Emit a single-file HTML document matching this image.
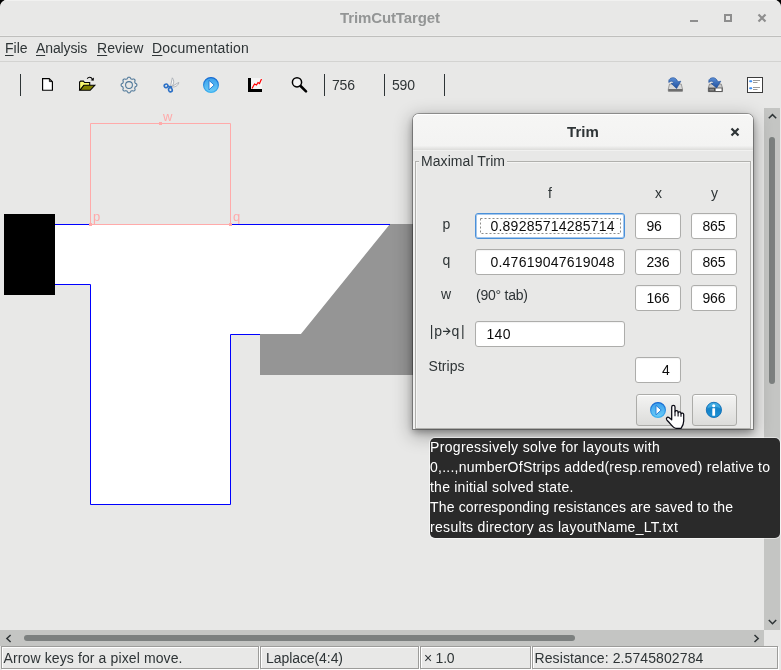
<!DOCTYPE html>
<html>
<head>
<meta charset="utf-8">
<title>TrimCutTarget</title>
<style>
*{box-sizing:border-box;margin:0;padding:0}
html,body{width:781px;height:670px;overflow:hidden;background:#000;}
body{font-family:"Liberation Sans",sans-serif;font-size:14px;line-height:20px;color:#2e3436;position:relative}
.abs{position:absolute}
.t{position:absolute;white-space:pre;font-size:14px;line-height:20px;color:#2e3436}
#win{will-change:transform;position:absolute;left:0;top:0;width:781px;height:670px;background:#e8e8e7;border-radius:7px 7px 0 0;overflow:hidden}
#titlebar{position:absolute;left:0;top:0;width:781px;height:37px;border-bottom:1px solid #bfbfbd;background:#e8e8e7;box-shadow:inset 0 1px #f1f1f0,inset 0 -1px #ecECeb}
#title{position:absolute;left:340px;top:8px;font-weight:bold;font-size:15px;color:#939595;letter-spacing:-0.117px;white-space:pre}
#menubar{position:absolute;left:0;top:37px;width:781px;height:25px;border-bottom:1px solid #d3d3d1}
.mi u{text-decoration:underline;text-underline-offset:1.5px;text-decoration-thickness:1px}
.vsep{position:absolute;width:1px;background:#2e3436;top:74px;height:22px}
#canvas{position:absolute;left:0;top:108px;width:781px;height:522px;background:#e8e8e7;overflow:hidden}
#status{position:absolute;left:0;top:646px;width:781px;height:24px;background:#e8e8e7}
#dialog{will-change:transform;position:absolute;left:413px;top:114px;width:340px;height:315px;background:#e8e8e7;border-radius:6px 6px 0 0;box-shadow:0 0 0 1px rgba(0,0,0,0.30),0 3px 7px 0px rgba(0,0,0,0.30),0 5px 18px 2px rgba(0,0,0,0.30);}
#dhead{position:absolute;left:0;top:0;width:340px;height:37px;border-radius:6px 6px 0 0;box-shadow:inset 0 1px #fff;background:linear-gradient(#f6f6f5 0%,#f3f3f2 88%,#dcdcda 100%);border-bottom:1px solid #91918c}
.inp{position:absolute;height:26px;background:#fff;border:1px solid #adadab;border-radius:3px;box-shadow:inset 0 1px 1px rgba(0,0,0,0.05)}
.btn{position:absolute;height:32px;width:45px;border:1px solid #acaca9;border-radius:3px;background:linear-gradient(#f4f4f3,#dcdcda);box-shadow:inset 0 1px #fff}
#tip{will-change:transform;position:absolute;left:430px;top:438px;width:350px;height:100px;background:#2a2a2a;border-radius:5px;box-shadow:0 0 0 1px rgba(255,255,255,0.5)}
#tip .t{color:#fff;left:0px}
.e{color:#0c0c0c}
</style>
</head>
<body>
<div id="win">
  <div id="titlebar">
    <div id="title">TrimCutTarget</div>
    <div class="abs" style="left:690px;top:20px;width:8px;height:2px;background:#8e8e8e"></div>
    <div class="abs" style="left:724px;top:14px;width:8px;height:8px;border:2px solid #8e8e8e"></div>
    <svg class="abs" style="left:757px;top:13px" width="10" height="10" viewBox="0 0 10 10"><path d="M1.5 1.5 L8.5 8.5 M8.5 1.5 L1.5 8.5" stroke="#8e8e8e" stroke-width="2.2" fill="none"/></svg>
  </div>
  <div id="menubar">
    <div class="t mi" style="left:5px;top:1px;letter-spacing:0px"><u>F</u>ile</div>
    <div class="t mi" style="left:36px;top:1px;letter-spacing:-0.12px"><u>A</u>nalysis</div>
    <div class="t mi" style="left:97px;top:1px;letter-spacing:0.08px"><u>R</u>eview</div>
    <div class="t mi" style="left:152px;top:1px;letter-spacing:0.22px"><u>D</u>ocumentation</div>
  </div>
  <!-- toolbar -->
  <div class="vsep" style="left:20px"></div>
  <div class="vsep" style="left:324px"></div>
  <div class="vsep" style="left:384px"></div>
  <div class="vsep" style="left:444px"></div>
  <div class="t" style="left:332px;top:75px;letter-spacing:-0.18px">756</div>
  <div class="t" style="left:392px;top:75px;letter-spacing:-0.18px">590</div>
  
  <svg class="abs" style="left:0;top:62px" width="781" height="46" viewBox="0 62 781 46">
    <defs>
      <linearGradient id="pg" x1="0" y1="0" x2="0" y2="1"><stop offset="0" stop-color="#3a9fec"/><stop offset="1" stop-color="#6ccdf7"/></linearGradient>
      <linearGradient id="ps" x1="0" y1="0" x2="0" y2="1"><stop offset="0" stop-color="#1668d0"/><stop offset="1" stop-color="#3fb2f0"/></linearGradient>
      <linearGradient id="ig" x1="0" y1="0" x2="0" y2="1"><stop offset="0" stop-color="#2a9adb"/><stop offset="0.5" stop-color="#1483c9"/><stop offset="1" stop-color="#1d93d6"/></linearGradient>
      <linearGradient id="ar" x1="0" y1="0" x2="0" y2="1"><stop offset="0" stop-color="#5b8fd6"/><stop offset="1" stop-color="#1f4f9e"/></linearGradient>
    </defs>
    <!-- new -->
    <path d="M42.6 78.6 H49.2 L52.4 81.8 V90.2 H42.6 Z" fill="#fff" stroke="#000" stroke-width="1.15"/>
    <path d="M49.4 79 V81.6 H52" fill="none" stroke="#000" stroke-width="0.9"/>
    <!-- open -->
    <path d="M79.6 90.2 V82 L80.6 81.1 H83.4 L84.6 82.5 H89.7 V85.2" fill="#fafa70" stroke="#000" stroke-width="1.1"/>
    <path d="M79.8 90.3 L83.8 85.3 H94.8 L90.2 90.3 Z" fill="#808000" stroke="#000" stroke-width="1.1"/>
    <path d="M87.2 78.6 C88.6 76.7 91 76.8 92.4 79" fill="none" stroke="#000" stroke-width="1.1"/>
    <path d="M94 77.5 L93.6 80.8 L90.6 80.3 Z" fill="#000"/>
    <!-- gear -->
    <g fill="none" stroke="#4d7698" stroke-width="1.05">
      <path d="M129.00 77.15 L129.26 77.15 L129.51 77.17 L129.77 77.19 L130.00 77.43 L130.21 77.70 L130.39 77.99 L130.57 78.28 L130.72 78.57 L130.87 78.82 L131.07 78.89 L131.27 78.96 L131.47 79.04 L131.66 79.12 L131.85 79.22 L132.04 79.31 L132.33 79.23 L132.64 79.14 L132.97 79.05 L133.31 78.98 L133.65 78.94 L133.98 78.94 L134.18 79.10 L134.37 79.27 L134.55 79.45 L134.73 79.63 L134.90 79.82 L135.06 80.02 L135.06 80.35 L135.02 80.69 L134.95 81.03 L134.86 81.36 L134.77 81.67 L134.69 81.96 L134.78 82.15 L134.88 82.34 L134.96 82.53 L135.04 82.73 L135.11 82.93 L135.18 83.13 L135.43 83.28 L135.72 83.43 L136.01 83.61 L136.30 83.79 L136.57 84.00 L136.81 84.23 L136.83 84.49 L136.85 84.74 L136.85 85.00 L136.85 85.26 L136.83 85.51 L136.81 85.77 L136.57 86.00 L136.30 86.21 L136.01 86.39 L135.72 86.57 L135.43 86.72 L135.18 86.87 L135.11 87.07 L135.04 87.27 L134.96 87.47 L134.88 87.66 L134.78 87.85 L134.69 88.04 L134.77 88.33 L134.86 88.64 L134.95 88.97 L135.02 89.31 L135.06 89.65 L135.06 89.98 L134.90 90.18 L134.73 90.37 L134.55 90.55 L134.37 90.73 L134.18 90.90 L133.98 91.06 L133.65 91.06 L133.31 91.02 L132.97 90.95 L132.64 90.86 L132.33 90.77 L132.04 90.69 L131.85 90.78 L131.66 90.88 L131.47 90.96 L131.27 91.04 L131.07 91.11 L130.87 91.18 L130.72 91.43 L130.57 91.72 L130.39 92.01 L130.21 92.30 L130.00 92.57 L129.77 92.81 L129.51 92.83 L129.26 92.85 L129.00 92.85 L128.74 92.85 L128.49 92.83 L128.23 92.81 L128.00 92.57 L127.79 92.30 L127.61 92.01 L127.43 91.72 L127.28 91.43 L127.13 91.18 L126.93 91.11 L126.73 91.04 L126.53 90.96 L126.34 90.88 L126.15 90.78 L125.96 90.69 L125.67 90.77 L125.36 90.86 L125.03 90.95 L124.69 91.02 L124.35 91.06 L124.02 91.06 L123.82 90.90 L123.63 90.73 L123.45 90.55 L123.27 90.37 L123.10 90.18 L122.94 89.98 L122.94 89.65 L122.98 89.31 L123.05 88.97 L123.14 88.64 L123.23 88.33 L123.31 88.04 L123.22 87.85 L123.12 87.66 L123.04 87.47 L122.96 87.27 L122.89 87.07 L122.82 86.87 L122.57 86.72 L122.28 86.57 L121.99 86.39 L121.70 86.21 L121.43 86.00 L121.19 85.77 L121.17 85.51 L121.15 85.26 L121.15 85.00 L121.15 84.74 L121.17 84.49 L121.19 84.23 L121.43 84.00 L121.70 83.79 L121.99 83.61 L122.28 83.43 L122.57 83.28 L122.82 83.13 L122.89 82.93 L122.96 82.73 L123.04 82.53 L123.12 82.34 L123.22 82.15 L123.31 81.96 L123.23 81.67 L123.14 81.36 L123.05 81.03 L122.98 80.69 L122.94 80.35 L122.94 80.02 L123.10 79.82 L123.27 79.63 L123.45 79.45 L123.63 79.27 L123.82 79.10 L124.02 78.94 L124.35 78.94 L124.69 78.98 L125.03 79.05 L125.36 79.14 L125.67 79.23 L125.96 79.31 L126.15 79.22 L126.34 79.12 L126.53 79.04 L126.73 78.96 L126.93 78.89 L127.13 78.82 L127.28 78.57 L127.43 78.28 L127.61 77.99 L127.79 77.70 L128.00 77.43 L128.23 77.19 L128.49 77.17 L128.74 77.15 Z"/>
      <circle cx="129" cy="85" r="3.4"/>
    </g>
    <!-- scissors -->
    <path d="M170.4 86.8 L172.3 77.8 C173.9 79.6 174.2 82.4 172.9 85 Z" fill="#f6f6f6" stroke="#a9aeb4" stroke-width="0.9"/>
    <path d="M171 87 L178.8 82.4 C178.6 84.6 177 86.2 174.2 86.9 Z" fill="#f6f6f6" stroke="#a9aeb4" stroke-width="0.9"/>
    <ellipse cx="166.1" cy="85.8" rx="1.9" ry="1.7" transform="rotate(-20 166.1 85.8)" fill="none" stroke="#2c70c6" stroke-width="1.6"/>
    <ellipse cx="170.4" cy="89.8" rx="1.8" ry="2.1" transform="rotate(-20 170.4 89.8)" fill="none" stroke="#2c70c6" stroke-width="1.6"/>
    <path d="M167.8 86.3 L171.2 86.9 L171 87.8" fill="none" stroke="#2c70c6" stroke-width="1.4"/>
    <!-- play -->
    <circle cx="211" cy="85" r="7.4" fill="url(#pg)" stroke="url(#ps)" stroke-width="1.2"/>
    <path d="M209 80.4 L214.2 85 L209 89.8 Z" fill="#fff" stroke="#1e78d4" stroke-width="0.9" stroke-linejoin="round"/>
    <!-- chart -->
    <rect x="248" y="78" width="14" height="14" fill="#f6f6f6"/>
    <path d="M249.5 78 V90.5 H262" fill="none" stroke="#000" stroke-width="3"/>
    <path d="M252 88.5 L254.5 84 L256.5 85 L258 82.5 L259.5 83.5 L261.5 79" fill="none" stroke="#f00" stroke-width="1.2"/>
    <!-- magnifier -->
    <circle cx="297" cy="82.3" r="4.6" fill="#f4f4f4" stroke="#000" stroke-width="1.5"/>
    <path d="M300.6 86 L306 91.4" stroke="#000" stroke-width="2.6" stroke-linecap="round"/>
    <!-- save 1 -->
    <g>
      <path d="M669.5 84 L668.3 89 V91.2 H682.5 V89 L681.2 84 Z" fill="#d8d8d8" stroke="#8c8c8c" stroke-width="0.8"/>
      <rect x="668.3" y="89" width="14.2" height="2.4" fill="#6e6e6e"/>
      <path d="M668.8 80.5 C669.5 77.5 674.5 76.5 676.6 79.6 L678 81.8 L680.8 81.2 L676.6 88.6 L671.2 83.4 L673.8 82.8 C673 81 670.8 80.6 668.8 82.6 Z" fill="url(#ar)" stroke="#1c4a94" stroke-width="0.6"/>
    </g>
    <!-- save 2 -->
    <g transform="translate(40,0)">
      <path d="M669.5 84 L668.3 88 V91.6 H682.5 V88 L681.2 84 Z" fill="#c8c8c8" stroke="#7c7c7c" stroke-width="0.8"/>
      <rect x="668.3" y="87.6" width="14.2" height="4.2" fill="#4e4e4e"/>
      <rect x="675.6" y="88.4" width="6" height="2.6" fill="#fff"/>
      <rect x="669.4" y="88.8" width="4.6" height="1.8" fill="#8a8a8a"/>
      <path d="M668.8 80.5 C669.5 77.5 674.5 76.5 676.6 79.6 L678 81.8 L680.8 81.2 L676.6 88 L671.2 83.4 L673.8 82.8 C673 81 670.8 80.6 668.8 82.6 Z" fill="url(#ar)" stroke="#1c4a94" stroke-width="0.6"/>
    </g>
    <!-- checklist -->
    <rect x="747.5" y="77.5" width="15" height="15" fill="#fff" stroke="#3c3c3c" stroke-width="1"/>
    <rect x="749.2" y="80.3" width="3" height="2" rx="0.8" fill="#3d8df0"/>
    <rect x="749.2" y="87.3" width="3" height="2" rx="0.8" fill="#3d8df0"/>
    <path d="M753 80.5 H760 M753 82.5 H757.5 M753 87.5 H760 M753 89.5 H757.5" stroke="#8f8f8f" stroke-width="0.9"/>
  </svg>


  <div id="canvas">
    <svg width="781" height="522" viewBox="0 108 781 522" style="position:absolute;left:0;top:0">
      <polygon points="55,225 390,225 301,334 231,334 231,504 91,504 91,285 55,285" fill="#ffffff"/>
      <polygon points="390,224 420,224 420,375 260,375 260,334 301,334" fill="#959595"/>
      <rect x="4" y="214" width="51" height="81" fill="#000"/>
      <path d="M55 224.5 H390 M55 284.5 H90.5 V504.5 H230.5 V334.5 H260" stroke="#0000ff" stroke-width="1" fill="none"/>
      <path d="M90.5 225 V123.5 H230.5 V225 M90 224.5 H231" stroke="#ffaaaa" stroke-width="1" fill="none"/>
      <rect x="89" y="223" width="3" height="3" fill="#ffaaaa"/>
      <rect x="229" y="223" width="3" height="3" fill="#ffaaaa"/>
      <rect x="159" y="122" width="3" height="3" fill="#ffaaaa"/>
    </svg>
    <div class="t" style="left:163px;top:-1px;font-size:13px;color:#ffaaaa">w</div>
    <div class="t" style="left:93px;top:99px;font-size:13px;color:#ffaaaa">p</div>
    <div class="t" style="left:233px;top:99px;font-size:13px;color:#ffaaaa">q</div>
    <!-- v scrollbar -->
    <div class="abs" style="left:764px;top:0;width:16px;height:522px;background:#c4c5c3"></div>
    <div class="abs" style="left:769px;top:29px;width:6px;height:247px;border-radius:3px;background:#7c807f"></div>
    <svg class="abs" style="left:766px;top:3px" width="13" height="10" viewBox="766 111 13 10"><path d="M768.8 118.2 L772.5 114.6 L776.2 118.2" stroke="#2e3436" stroke-width="1.5" fill="none"/></svg>
    <svg class="abs" style="left:766px;top:509px" width="13" height="10" viewBox="766 617 13 10"><path d="M768.8 620 L772.5 623.7 L776.2 620" stroke="#2e3436" stroke-width="1.5" fill="none"/></svg>
  </div>
  <!-- h scrollbar -->
  <div class="abs" style="left:0;top:630px;width:764px;height:16px;background:#c4c5c3"></div>
  <div class="abs" style="left:24px;top:635px;width:551px;height:6px;border-radius:3px;background:#7c807f"></div>
  <svg class="abs" style="left:4px;top:632px" width="10" height="13" viewBox="4 632 10 13"><path d="M10.6 635 L6.9 638.5 L10.6 642" stroke="#2e3436" stroke-width="1.5" fill="none"/></svg>
  <svg class="abs" style="left:750px;top:632px" width="12" height="13" viewBox="750 632 12 13"><path d="M754.5 635 L758.2 638.5 L754.5 642" stroke="#2e3436" stroke-width="1.5" fill="none"/></svg>

  <div id="status">
    <div class="abs" style="left:2px;top:1px;width:258px;height:23px;border:1px solid #fff"></div>
    <div class="abs" style="left:1px;top:0px;width:258px;height:23px;border:1px solid #9c9c9a"></div>
    <div class="abs" style="left:261px;top:1px;width:159px;height:23px;border:1px solid #fff"></div>
    <div class="abs" style="left:260px;top:0px;width:159px;height:23px;border:1px solid #9c9c9a"></div>
    <div class="abs" style="left:421px;top:1px;width:111px;height:23px;border:1px solid #fff"></div>
    <div class="abs" style="left:420px;top:0px;width:111px;height:23px;border:1px solid #9c9c9a"></div>
    <div class="abs" style="left:533px;top:1px;width:246px;height:23px;border:1px solid #fff"></div>
    <div class="abs" style="left:532px;top:0px;width:246px;height:23px;border:1px solid #9c9c9a"></div>
    <div class="t" style="left:3.5px;top:2px;letter-spacing:0.117px">Arrow keys for a pixel move.</div>
    <div class="t" style="left:266px;top:2px;letter-spacing:-0.075px">Laplace(4:4)</div>
    <div class="t" style="left:424px;top:2px;letter-spacing:-0.23px">× 1.0</div>
    <div class="t" style="left:534.5px;top:2px;letter-spacing:0.097px">Resistance: 2.5745802784</div>
  </div>
</div>

<div id="dialog">
  <div id="dhead">
    <div class="t" style="left:154px;top:8px;font-weight:bold;font-size:15px;letter-spacing:0.05px">Trim</div>
    <svg class="abs" style="left:317px;top:13px" width="10" height="10" viewBox="0 0 10 10"><path d="M1.5 1.5 L8.5 8.5 M8.5 1.5 L1.5 8.5" stroke="#2e3436" stroke-width="2.2" fill="none"/></svg>
  </div>
  <!-- frame -->
  <div class="abs" style="left:0;top:36px;width:340px;height:279px;background:#f1f1f0"></div><div class="abs" style="left:2px;top:47px;width:336px;height:268px;border:1px solid #b0b0ad;background:#e8e8e7;box-shadow:inset 1px 1px #f4f4f3"></div><div class="abs" style="left:0px;top:37px;width:340px;height:10px;background:#e8e8e7"></div>
  <div class="abs" style="left:6px;top:40px;width:88px;height:16px;background:#e8e8e7"></div>
  <div class="t" style="left:8px;top:37px;letter-spacing:0.07px">Maximal Trim</div>

  <div class="t" style="left:135px;top:69px">f</div>
  <div class="t" style="left:242px;top:69px">x</div>
  <div class="t" style="left:298px;top:69px">y</div>
  <div class="t" style="left:29.5px;top:99.5px">p</div>
  <div class="t" style="left:29.5px;top:135.5px">q</div>
  <div class="t" style="left:28px;top:169.5px">w</div>
  <div class="t" style="left:63px;top:170.5px;letter-spacing:-0.23px">(90° tab)</div>
  <div class="t" style="left:16.7px;top:207px"><span style="letter-spacing:0.8px">|</span>p</div>
  <div class="t" style="left:38.4px;top:207px"><span style="letter-spacing:1.7px">q</span>|</div>
  <svg class="abs" style="left:28px;top:211px" width="12" height="12" viewBox="441 325 12 12"><path d="M443 331.3 H449.6 M446.4 327.9 L449.9 331.3 L446.4 334.7" fill="none" stroke="#2e3436" stroke-width="1.15"/></svg>
  <div class="t" style="left:15.5px;top:242px;letter-spacing:0.04px">Strips</div>

  <div class="inp" style="left:62px;top:99px;width:150px;border:1px solid #4a90d9;box-shadow:inset 0 0 0 1px rgba(74,144,217,0.5)"></div>
  <svg class="abs" style="left:67px;top:104px" width="141" height="16"><rect x="0.5" y="0.5" width="140" height="15" fill="none" stroke="#8c8c8a" stroke-width="1" stroke-dasharray="2 2"/></svg>
  <div class="inp" style="left:62px;top:135px;width:150px"></div>
  <div class="inp" style="left:62px;top:207px;width:150px"></div>
  <div class="inp" style="left:222px;top:99px;width:46px"></div>
  <div class="inp" style="left:278px;top:99px;width:46px"></div>
  <div class="inp" style="left:222px;top:135px;width:46px"></div>
  <div class="inp" style="left:278px;top:135px;width:46px"></div>
  <div class="inp" style="left:222px;top:171px;width:46px"></div>
  <div class="inp" style="left:278px;top:171px;width:46px"></div>
  <div class="inp" style="left:222px;top:243px;width:46px"></div>

  <div class="t e" style="left:77.5px;top:102px;letter-spacing:0.22px">0.89285714285714</div>
  <div class="t e" style="left:77.5px;top:138px;letter-spacing:0.22px">0.47619047619048</div>
  <div class="t e" style="left:73.5px;top:210px;letter-spacing:0.32px">140</div>
  <div class="t e" style="left:233.5px;top:102px;letter-spacing:-0.18px">96</div>
  <div class="t e" style="left:289.5px;top:102px;letter-spacing:-0.18px">865</div>
  <div class="t e" style="left:233.5px;top:138px;letter-spacing:-0.18px">236</div>
  <div class="t e" style="left:289.5px;top:138px;letter-spacing:-0.18px">865</div>
  <div class="t e" style="left:233.5px;top:174px;letter-spacing:-0.18px">166</div>
  <div class="t e" style="left:289.5px;top:174px;letter-spacing:-0.18px">966</div>
  <div class="t e" style="left:249px;top:246px">4</div>

  <div class="btn" style="left:223px;top:280px"></div>
  <div class="btn" style="left:279px;top:280px"></div>
  
  <svg class="abs" style="left:223px;top:280px" width="110" height="40" viewBox="636 394 110 40">
    <circle cx="658" cy="410" r="7.4" fill="url(#pg)" stroke="url(#ps)" stroke-width="1.2"/>
    <path d="M656 405.4 L661.2 410 L656 414.8 Z" fill="#fff" stroke="#1e78d4" stroke-width="0.9" stroke-linejoin="round"/>
    <circle cx="713.9" cy="409.9" r="7.6" fill="url(#ig)" stroke="#0f6db4" stroke-width="0.9"/>
    <path d="M707.2 408.6 A6.8 6.8 0 0 1 720.6 408.6 C717 406.2 711 406.2 707.2 408.6 Z" fill="#59bdea" opacity="0.55"/>
    <circle cx="713.7" cy="405.8" r="1.55" fill="#fff"/>
    <rect x="712.3" y="408.3" width="2.8" height="7.4" rx="0.5" fill="#fff"/>
  </svg>

</div>

<div id="tip">
  <div class="t" style="top:-1px;letter-spacing:0.338px">Progressively solve for layouts with</div>
  <div class="t" style="top:19px;letter-spacing:0.243px">0,...,numberOfStrips added(resp.removed) relative to</div>
  <div class="t" style="top:39px;letter-spacing:0.231px">the initial solved state.</div>
  <div class="t" style="top:59px;letter-spacing:0.161px">The corresponding resistances are saved to the</div>
  <div class="t" style="top:79px;letter-spacing:0.311px">results directory as layoutName_LT.txt</div>
</div>

<svg class="abs" style="left:662px;top:400px" width="26" height="32" viewBox="662 400 26 32">
  <path d="M671.7 419.8 V406.9 C671.7 404.7 675 404.7 675 406.9 V411.8 C675.4 410.2 677.9 410.3 678.1 412 V412.8 C678.6 411.4 680.9 411.6 681 413.2 V413.8 C681.6 412.6 683.7 412.9 683.7 414.6 V421 C683.7 424.6 682.4 426.4 681 428.4 H676 C672.6 428.2 671.4 424.4 667 420.2 C665.5 418.4 667.3 416.3 669.2 417.7 Z" fill="#fff" stroke="#0a0a14" stroke-width="1.25" stroke-linejoin="round"/>
  <path d="M675 411.6 V416.2 M678.1 412.6 V416.4 M681 413.6 V416.8" stroke="#0a0a14" stroke-width="1.1" fill="none"/>
</svg>

</body>
</html>
